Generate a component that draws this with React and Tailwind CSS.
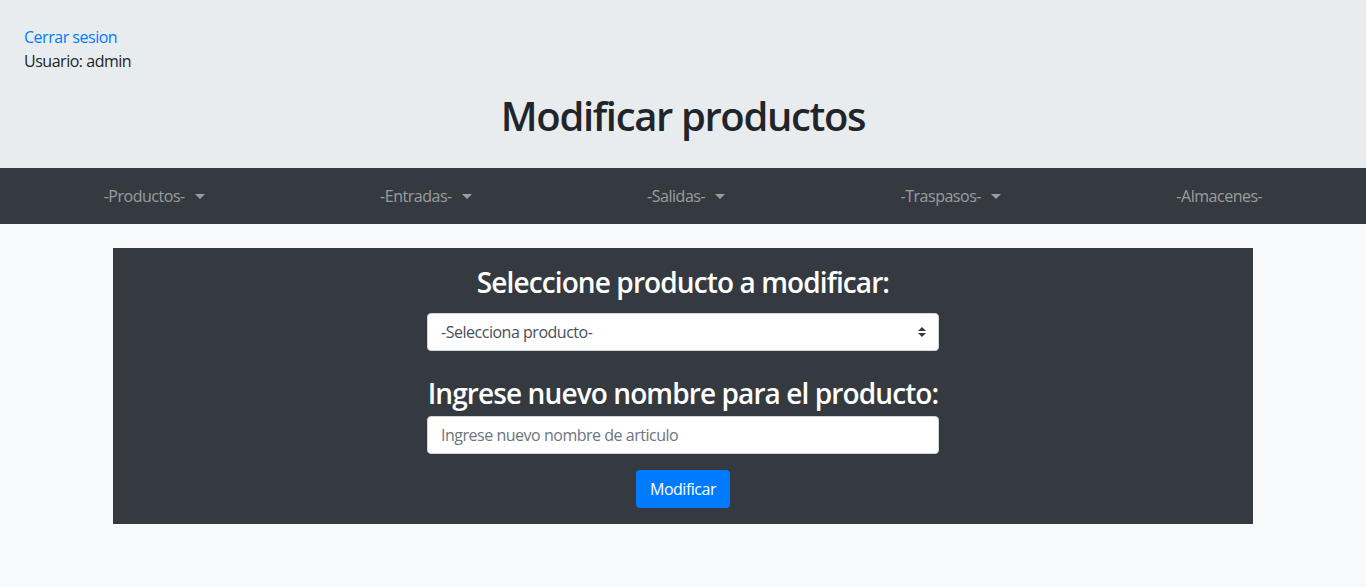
export default function App() {
  const menus = [
    { label: '-Productos-', caret: true },
    { label: '-Entradas-', caret: true },
    { label: '-Salidas-', caret: true },
    { label: '-Traspasos-', caret: true },
    { label: '-Almacenes-', caret: false },
  ];

  return (
    <div className="min-h-[587px] bg-[#f8f9fa] text-[#212529] text-base tracking-[-0.03em] font-['Segoe_UI','Open_Sans',sans-serif]">
      {/* encabezado */}
      <header className="bg-[#e9ecef] px-6 pt-[25px] pb-[28px]">
        <a href="#" className="block leading-6 text-[#007bff]">Cerrar sesion</a>
        <p className="leading-6">Usuario: admin</p>
        <h1 className="mt-[19px] text-center text-[40px] leading-[48px] font-semibold tracking-[-0.034em]">Modificar productos</h1>
      </header>

      <nav className="bg-[#343a40] h-14 px-4 flex items-center justify-around">
        {menus.map((m) => (
          <a key={m.label} href="#" className="flex items-center text-[rgba(255,255,255,0.5)] leading-6">
            {m.label}
            {m.caret && (
              <span className="ml-[10px] inline-block w-0 h-0 border-l-[5px] border-r-[5px] border-t-[5px] border-l-transparent border-r-transparent border-t-[rgba(255,255,255,0.5)]" />
            )}
          </a>
        ))}
      </nav>

      <main className="mt-6 mx-auto w-[1140px] bg-[#343a40] pt-[17px] pb-4 flex flex-col items-center">
        <h3 className="text-white text-[28px] leading-[34px] font-semibold tracking-[-0.032em]">Seleccione producto a modificar:</h3>
        <div className="relative mt-[14px] w-[512px]">
          <select className="appearance-none w-full h-[38px] bg-white rounded border border-[#ced4da] pl-[13px] pr-8 text-[#495057] outline-none">
            <option>-Selecciona producto-</option>
          </select>
          <span className="pointer-events-none absolute right-[13px] top-1/2 -translate-y-1/2 flex flex-col gap-[2px]">
            <span className="w-0 h-0 border-l-4 border-r-4 border-b-[4px] border-l-transparent border-r-transparent border-b-[#343a40]" />
            <span className="w-0 h-0 border-l-4 border-r-4 border-t-[4px] border-l-transparent border-r-transparent border-t-[#343a40]" />
          </span>
        </div>

        <h3 className="mt-[25px] text-white text-[28px] leading-[34px] font-semibold tracking-[-0.032em]">Ingrese nuevo nombre para el producto:</h3>
        <input
          type="text"
          placeholder="Ingrese nuevo nombre de articulo"
          className="mt-[6px] w-[512px] h-[38px] bg-white rounded border border-[#ced4da] px-[13px] text-[#495057] placeholder:text-[#6c757d] outline-none"
        />

        <button className="mt-4 h-[38px] px-[14px] rounded bg-[#007bff] text-white">Modificar</button>
      </main>
    </div>
  );
}
